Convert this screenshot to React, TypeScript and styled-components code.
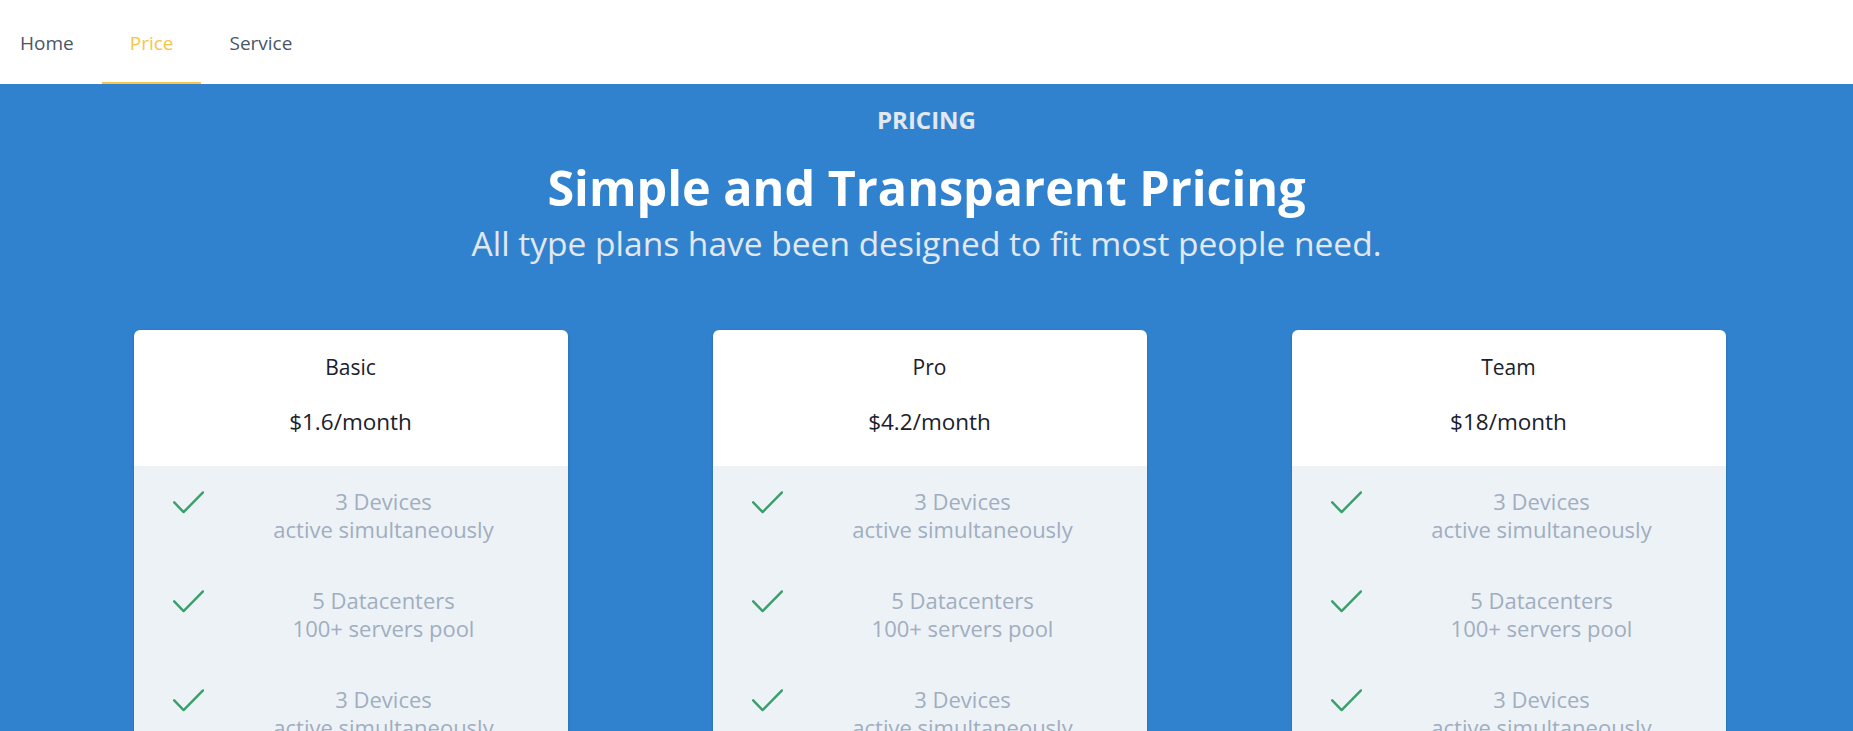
import React from "react";
import styled, { createGlobalStyle } from "styled-components";

const GlobalStyle = createGlobalStyle`
  html, body {
    margin: 0;
    padding: 0;
    background: #3182ce;
  }
  body {
    font-family: "Open Sans", "Noto Sans", "Liberation Sans", sans-serif;
    -webkit-font-smoothing: antialiased;
  }
  * { box-sizing: border-box; }
`;

const Page = styled.div`
  min-height: 100vh;
  display: flex;
  flex-direction: column;
`;

const NavBar = styled.nav`
  height: 84px;
  background: #ffffff;
  display: flex;
  align-items: stretch;
`;

const NavItem = styled.a<{ $active?: boolean }>`
  display: flex;
  align-items: center;
  padding: 3px 28px 0;
  font-size: 19px;
  color: ${(p) => (p.$active ? "#f6c549" : "#4a5568")};
  border-bottom: 2px solid ${(p) => (p.$active ? "#f6c549" : "transparent")};
  text-decoration: none;
  cursor: pointer;
  &:first-child {
    padding-left: 20px;
  }
`;

const Hero = styled.section`
  flex: 1;
  background: #3182ce;
  display: flex;
  flex-direction: column;
  align-items: center;
  padding-top: 21px;
`;

const Eyebrow = styled.div`
  font-size: 24px;
  font-weight: 700;
  line-height: 30px;
  color: #e2e8f0;
`;

const Title = styled.h1`
  margin: 23px 0 0;
  font-size: 48.5px;
  font-weight: 700;
  line-height: 58px;
  color: #ffffff;
`;

const Subtitle = styled.p`
  margin: 5px 0 0;
  font-size: 33.5px;
  line-height: 44px;
  color: #e2e8f0;
`;

const Cards = styled.div`
  margin-top: 65px;
  width: 100%;
  padding-left: 6px;
  display: grid;
  grid-template-columns: repeat(3, 434px);
  column-gap: 145px;
  justify-content: center;
`;

const Card = styled.div`
  background: #ffffff;
  border-radius: 6px;
  overflow: hidden;
  box-shadow: 0 1px 3px rgba(0, 0, 0, 0.12), 0 1px 2px rgba(0, 0, 0, 0.08);
`;

const CardHead = styled.div`
  height: 136px;
  display: flex;
  flex-direction: column;
  align-items: center;
  padding-top: 20px;
  gap: 21px;
  color: #1a202c;
`;

const PlanName = styled.div`
  font-size: 21px;
  line-height: 34px;
`;

const PlanPrice = styled.div`
  font-size: 22.5px;
  line-height: 34px;
`;

const Features = styled.ul`
  margin: 0;
  list-style: none;
  background: #edf2f7;
  padding: 21px 4px 40px 39px;
  display: flex;
  flex-direction: column;
  gap: 43px;
`;

const Feature = styled.li`
  display: flex;
  align-items: flex-start;
`;

const CheckMark = styled.svg`
  flex: none;
  width: 31px;
  height: 23px;
  margin-top: 4px;
`;

const FeatureText = styled.div`
  flex: 1;
  text-align: center;
  font-size: 22px;
  line-height: 28px;
  color: #a0aec0;
`;

const Check = () => (
  <CheckMark viewBox="0 0 31 23" fill="none">
    <polyline
      points="1.2,11.3 10.6,21.1 30,1.4"
      stroke="#38a169"
      strokeWidth="2.4"
      strokeLinecap="round"
      strokeLinejoin="round"
    />
  </CheckMark>
);

const features: [string, string][] = [
  ["3 Devices", "active simultaneously"],
  ["5 Datacenters", "100+ servers pool"],
  ["3 Devices", "active simultaneously"],
  ["5 Datacenters", "100+ servers pool"],
];

const plans = [
  { name: "Basic", price: "$1.6/month" },
  { name: "Pro", price: "$4.2/month" },
  { name: "Team", price: "$18/month" },
];

export default function App() {
  return (
    <Page>
      <GlobalStyle />
      <NavBar>
        <NavItem>Home</NavItem>
        <NavItem $active>Price</NavItem>
        <NavItem>Service</NavItem>
      </NavBar>
      <Hero>
        <Eyebrow>PRICING</Eyebrow>
        <Title>Simple and Transparent Pricing</Title>
        <Subtitle>All type plans have been designed to fit most people need.</Subtitle>
        <Cards>
          {plans.map((p) => (
            <Card key={p.name}>
              <CardHead>
                <PlanName>{p.name}</PlanName>
                <PlanPrice>{p.price}</PlanPrice>
              </CardHead>
              <Features>
                {features.map(([a, b], i) => (
                  <Feature key={i}>
                    <Check />
                    <FeatureText>
                      {a}
                      <br />
                      {b}
                    </FeatureText>
                  </Feature>
                ))}
              </Features>
            </Card>
          ))}
        </Cards>
      </Hero>
    </Page>
  );
}
